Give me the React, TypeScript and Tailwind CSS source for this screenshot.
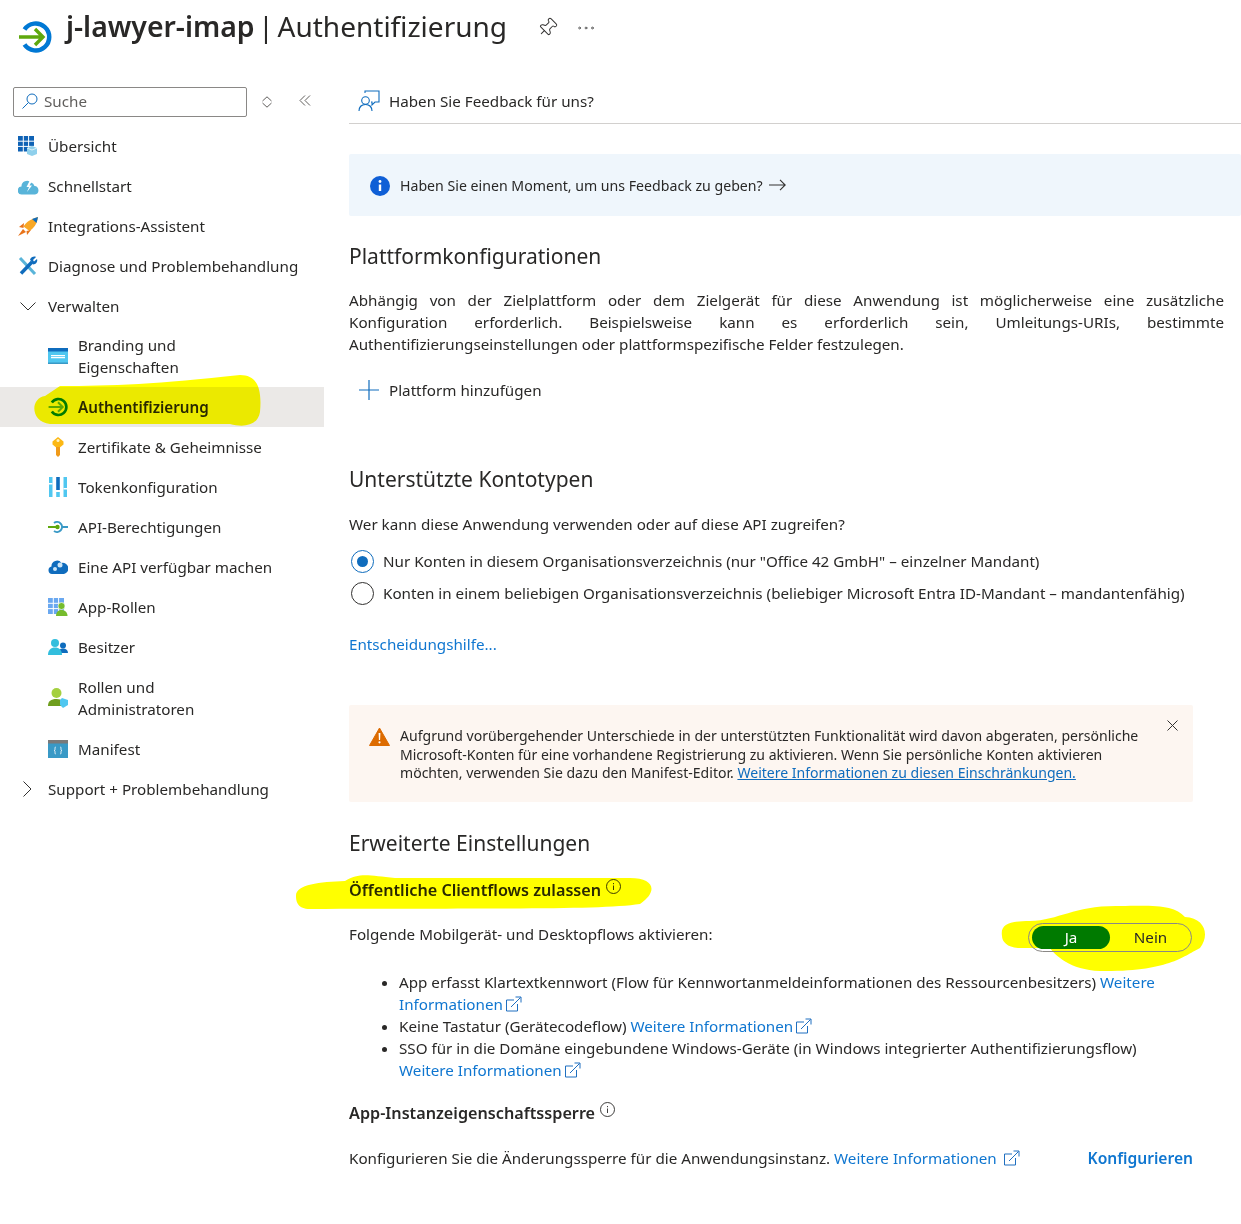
import React from 'react';
import { Ellipsis, Pin } from 'lucide-react';

const AuthIcon = ({ size = 34, ring = '#0078d4', arrow = '#5ea80d' }: { size?: number; ring?: string; arrow?: string }) => (
    <svg width={size} height={size} viewBox="0 0 34 34" fill="none">
        <path d="M6.5 9.5A13.5 13.5 0 1 1 6.5 24.5" stroke={ring} strokeWidth="4.5" />
        <path d="M1 17h24M17 9l8 8-8 8" stroke={arrow} strokeWidth="3.4" />
    </svg>
);

const GridIcon = () => (
    <svg width="20" height="20" viewBox="0 0 20 20">
        <path d="M0 0h16v15.500H0z" fill="#0f62b5" />
        <path d="M5.300 0v16M10.600 0v16M0 5.200h16M0 10.400h16" stroke="#fff" strokeWidth="1" />
        <path d="M14 10l5 2v6l-5 2-5-2v-6z" fill="#8fd0ec" />
        <path d="M9 12l5 2 5-2" stroke="#fff" strokeWidth=".7" fill="none" />
    </svg>
);

const CloudIcon = () => (
    <svg width="21" height="17" viewBox="0 0 21 17">
        <path d="M4 16.500a4 4 0 0 1-.5-8A5.500 5.500 0 0 1 13 4.500a5 5 0 0 1 3.500 3.500A4.300 4.300 0 0 1 17 16.500z" fill="#59b4d9" />
        <path d="M12 2L8.500 9H11l-2 5 5-6.500h-2.500L14 3z" fill="#fff" />
    </svg>
);

const RocketIcon = () => (
    <svg width="20" height="20" viewBox="0 0 20 20">
        <path d="M5.500 10.500C8 6 13 3 20 1c-1 7-4 11-8.500 14z" fill="#f9a825" />
        <path d="M14 3l6-2-1.500 6z" fill="#0f6cbd" />
        <path d="M6 7L1 11l4.500 1zM13 14l-4 5-.5-4zM5 13l3 3-8 4z" fill="#e8731a" />
    </svg>
);

const ToolsIcon = () => (
    <svg width="20" height="20" viewBox="0 0 20 20" fill="none">
        <path d="M2 2l15 16" stroke="#59b4d9" strokeWidth="3" />
        <path d="M14 6L3 17.500" stroke="#0f6cbd" strokeWidth="3.400" />
        <path d="M12 3.500C13 1 16 0 18 1l-3 3 1 1.500 3-2.500c1 2.500-1 5.500-4 5.500z" fill="#0f6cbd" />
    </svg>
);

const WwwIcon = () => (
    <svg width="20" height="16" viewBox="0 0 20 16">
        <rect width="20" height="16" fill="#50c7f0" />
        <rect width="20" height="3.500" fill="#0f6cbd" />
        <rect y="14.500" width="20" height="1.500" fill="#3999c6" />
        <path d="M3 7h14v1.200H3zM3 9h14v1.200H3z" fill="#fff" />
    </svg>
);

const KeyIcon = () => (
    <svg width="14" height="20" viewBox="0 0 14 20">
        <path d="M7 0l5.500 4.500v3L7 12 1.500 7.500v-3z" fill="#fcb814" />
        <path d="M5 10h4v8l-2 2-2-2z" fill="#f09a1a" />
        <circle cx="7" cy="3.500" r="1.500" fill="#fff3c4" />
    </svg>
);

const TokenIcon = () => (
    <svg width="18" height="20" viewBox="0 0 18 20">
        <path d="M0 0h3.500v20H0zM14.500 0H18v20h-3.500z" fill="#50c7f0" />
        <path d="M7.200 0h3.600v13H7.200z" fill="#0f6cbd" />
        <path d="M7.200 15h3.600v5H7.200z" fill="#50c7f0" />
        <path d="M0 6h3.500v1.500H0zM14.500 11H18v1.500h-3.500z" fill="#fff" />
    </svg>
);

const ApiIcon = () => (
    <svg width="20" height="12" viewBox="0 0 20 12" fill="none">
        <path d="M0 6h9" stroke="#5ea80d" strokeWidth="2" />
        <path d="M14 6h6" stroke="#3999c6" strokeWidth="2" />
        <path d="M6 2a5 5 0 1 1 0 8" stroke="#3999c6" strokeWidth="2" />
        <circle cx="9.500" cy="6" r="2.200" fill="#5ea80d" />
    </svg>
);

const ApiCloudIcon = () => (
    <svg width="20" height="16" viewBox="0 0 20 16">
        <path d="M4 15a3.800 3.800 0 0 1-.5-7.500A5.500 5.500 0 0 1 13.500 4 5 5 0 0 1 16 15z" fill="#0f6cbd" />
        <circle cx="7" cy="10" r="2" fill="#cde6f7" />
        <circle cx="12" cy="6" r="2.500" fill="#cde6f7" />
    </svg>
);

const RolesIcon = () => (
    <svg width="20" height="18" viewBox="0 0 20 18">
        <path d="M0 0h16v16H0z" fill="#6aa8f0" />
        <path d="M5.300 0v16M10.600 0v16M0 5.300h16M0 10.600h16" stroke="#fff" strokeWidth="1" />
        <circle cx="13.500" cy="8" r="3.500" fill="#76bc2d" stroke="#fff" strokeWidth=".6" />
        <path d="M8 18c0-4 2.500-6 5.500-6s6 2 6 6z" fill="#76bc2d" />
    </svg>
);

const OwnerIcon = () => (
    <svg width="20" height="16" viewBox="0 0 20 16">
        <circle cx="15" cy="6.500" r="3" fill="#0f6cbd" />
        <path d="M10 14c0-3 2-4.500 5-4.500s5 1.500 5 4.500z" fill="#0f6cbd" />
        <circle cx="7" cy="4" r="4" fill="#32bedd" />
        <path d="M0 16c0-5 3-7.500 7-7.500s7 2.500 7 7.500z" fill="#32bedd" />
    </svg>
);

const AdminIcon = () => (
    <svg width="20" height="20" viewBox="0 0 20 20">
        <circle cx="8.500" cy="5" r="5" fill="#a4d03f" />
        <path d="M0 18c0-5 3-7 8.500-7S16 14 16 18z" fill="#6f9e1e" />
        <path d="M14 10l6 2v5l-5 3-3-3v-5z" fill="#50c7f0" />
    </svg>
);

const ManifestIcon = () => (
    <svg width="20" height="18" viewBox="0 0 20 18">
        <rect width="20" height="18" fill="#3999c6" />
        <rect width="20" height="3.500" fill="#7a7a7a" />
        <path d="M8 7c-1 0-1 .5-1 2s-.5 1.500-1 1.500c.5 0 1 0 1 1.500s0 2 1 2M12 7c1 0 1 .5 1 2s.5 1.500 1 1.500c-.5 0-1 0-1 1.500s0 2-1 2" stroke="#fff" strokeWidth=".8" fill="none" />
    </svg>
);

const FeedbackIcon = () => (
    <svg width="22" height="22" viewBox="0 0 22 22" fill="none" stroke="#0f6cbd" strokeWidth="1.100">
        <circle cx="7.500" cy="10.500" r="3.800" />
        <path d="M1 21c0-4 2.500-6.500 6.500-6.500S14 17 14 21" />
        <path d="M7 3V1h14v11h-4l-3 3v-3h-1" />
    </svg>
);

const WarningIcon = () => (
    <svg width="21" height="19" viewBox="0 0 21 19">
        <path d="M10.500 1L20.500 18.500H.5z" fill="#dd6b00" stroke="#dd6b00" strokeLinejoin="round" />
        <path d="M9.600 6h1.800l-.3 7H9.900z" fill="#fff" />
        <circle cx="10.500" cy="15.300" r="1.100" fill="#fff" />
    </svg>
);

const SearchGlyph = () => (
    <svg width="16" height="16" viewBox="0 0 16 16" fill="none" stroke="#0f6cbd" strokeWidth="1">
        <circle cx="10" cy="6" r="5" />
        <path d="M6.500 9.500L.5 15.500" />
    </svg>
);

const SortGlyph = () => (
    <svg width="10" height="12" viewBox="0 0 10 12" fill="none" stroke="#605e5c" strokeWidth="1">
        <path d="M.5 5L5 .8 9.500 5M.5 7L5 11.200 9.500 7" />
    </svg>
);

const CollapseGlyph = () => (
    <svg width="12" height="11" viewBox="0 0 12 11" fill="none" stroke="#605e5c" strokeWidth="1">
        <path d="M6 .5L1 5.500l5 5M11 .5l-5 5 5 5" />
    </svg>
);

const ChevronDownGlyph = () => (
    <svg width="16" height="9" viewBox="0 0 16 9" fill="none" stroke="#323130" strokeWidth="1">
        <path d="M.5 .5L8 8l7.500-7.500" />
    </svg>
);

const ChevronRightGlyph = () => (
    <svg width="9" height="16" viewBox="0 0 9 16" fill="none" stroke="#323130" strokeWidth="1">
        <path d="M.5 .5L8 8 .5 15.500" />
    </svg>
);

const InfoSolid = () => (
    <svg width="20" height="20" viewBox="0 0 20 20">
        <circle cx="10" cy="10" r="10" fill="#0f5fd6" />
        <circle cx="10" cy="5.500" r="1.400" fill="#fff" />
        <path d="M8.800 8.500h2.400V15H8.800z" fill="#fff" />
    </svg>
);

const InfoOutline = () => (
    <svg width="15" height="15" viewBox="0 0 15 15" fill="none" stroke="#292827" strokeWidth=".9">
        <circle cx="7.500" cy="7.500" r="7" />
        <path d="M7.500 6.500v4.500M7.500 4v1.200" />
    </svg>
);

const ArrowGlyph = () => (
    <svg width="17" height="12" viewBox="0 0 17 12" fill="none" stroke="#323130" strokeWidth="1.100">
        <path d="M0 6h16M11 .8L16.200 6 11 11.200" />
    </svg>
);

const PlusGlyph = () => (
    <svg width="20" height="20" viewBox="0 0 20 20" fill="none" stroke="#0f6cbd" strokeWidth="1.200">
        <path d="M10 0v20M0 10h20" />
    </svg>
);

const CloseGlyph = () => (
    <svg width="11" height="11" viewBox="0 0 11 11" fill="none" stroke="#323130" strokeWidth="1">
        <path d="M.5 .5l10 10M10.500 .5l-10 10" />
    </svg>
);

const ExternalGlyph = () => (
    <svg className="inline ml-[2px] -mt-[3px]" width="17" height="16" viewBox="0 0 17 16" fill="none" stroke="#1f6fc0" strokeWidth="1">
        <path d="M9 4H1.500v11h11V8" />
        <path d="M6 11L15.500 1.500M10.500 1h5.500v5.500" />
    </svg>
);

type NavItem = { label: React.ReactNode; icon: React.ReactNode; tall?: boolean; active?: boolean };

const topItems: NavItem[] = [
    { label: 'Übersicht', icon: <GridIcon /> },
    { label: 'Schnellstart', icon: <CloudIcon /> },
    { label: 'Integrations-Assistent', icon: <RocketIcon /> },
    { label: 'Diagnose und Problembehandlung', icon: <ToolsIcon /> },
];

const subItems: NavItem[] = [
    { label: <>Branding und<br />Eigenschaften</>, icon: <WwwIcon />, tall: true },
    { label: 'Authentifizierung', icon: <AuthIcon size={20} ring="#007a00" arrow="#5ea80d" />, active: true },
    { label: 'Zertifikate & Geheimnisse', icon: <span className="pl-[3px]"><KeyIcon /></span> },
    { label: 'Tokenkonfiguration', icon: <span className="pl-[1px]"><TokenIcon /></span> },
    { label: 'API-Berechtigungen', icon: <ApiIcon /> },
    { label: 'Eine API verfügbar machen', icon: <ApiCloudIcon /> },
    { label: 'App-Rollen', icon: <RolesIcon /> },
    { label: 'Besitzer', icon: <OwnerIcon /> },
    { label: <>Rollen und<br />Administratoren</>, icon: <AdminIcon />, tall: true },
    { label: 'Manifest', icon: <ManifestIcon /> },
];

const SideRow = ({ item, sub }: { item: NavItem; sub?: boolean }) => (
    <div className={`flex items-center ${item.tall ? 'h-[62px] leading-[22px]' : 'h-10'} ${sub ? 'pl-[48px]' : 'pl-[18px]'} ${item.active ? 'bg-[#ebe9e7] font-semibold' : ''}`}>
        <span className="w-[30px] shrink-0 flex items-center">{item.icon}</span>
        <span>{item.label}</span>
    </div>
);

const MoreLink = ({ children }: { children: React.ReactNode }) => (
    <span className="text-[#0f76d0]">
        {children}
        <ExternalGlyph />
    </span>
);

const Heading = ({ children, className }: { children: React.ReactNode; className?: string }) => (
    <h2 className={`text-[21px] leading-[30px] text-[#292827] ${className}`}>{children}</h2>
);

export default function App() {
    return (
        <div className="relative w-[1241px] h-[1224px] overflow-hidden bg-white text-[#292827] text-[15.2px] leading-[22px] font-['Noto_Sans',sans-serif]">
            <header className="flex h-[70px] items-start">
                <span className="ml-[18px] mt-[20px] w-[48px]"><AuthIcon /></span>
                <h1 className="text-[28px] leading-[40px] mt-[6px] text-[#292827] [word-spacing:-3.5px]">
                    <span className="font-semibold text-[28.4px]">j-lawyer-imap</span> | Authentifizierung
                </h1>
                <Pin className="ml-[30px] mt-[17px] rotate-45 text-[#323130]" size={21} strokeWidth={1.1} />
                <Ellipsis className="ml-[17px] mt-[17px] text-[#555]" size={22} strokeWidth={1} />
            </header>

            <div className="flex">
                <aside className="w-[324px] shrink-0">
                    <div className="flex items-center h-[56px] pl-[13px] pb-[8px] pt-[15px]">
                        <div className="flex items-center w-[234px] h-[30px] border border-[#8a8886] rounded-[2px] pl-[8px] pb-[1px] text-[#605e5c]">
                            <span className="mr-[6px] flex"><SearchGlyph /></span>
                            Suche
                        </div>
                        <span className="ml-[15px] flex"><SortGlyph /></span>
                        <span className="ml-[27px] flex -mt-[2px]"><CollapseGlyph /></span>
                    </div>
                    {topItems.map((item, i) => <SideRow key={i} item={item} />)}
                    <div className="flex items-center h-10 pl-[20px]">
                        <span className="w-[28px] flex"><ChevronDownGlyph /></span>
                        Verwalten
                    </div>
                    <div className="-mt-px">
                        {subItems.map((item, i) => <SideRow key={i} item={item} sub />)}
                        <div className="flex items-center h-10 pl-[23px]">
                            <span className="w-[25px] flex"><ChevronRightGlyph /></span>
                            Support + Problembehandlung
                        </div>
                    </div>
                </aside>

                <main className="flex-1 ml-[25px]">
                    <div className="flex items-center h-[54px] pt-[8px] pl-[9px] border-b border-[#d2d0ce]">
                        <span className="w-[31px]"><FeedbackIcon /></span>
                        Haben Sie Feedback für uns?
                    </div>

                    <div className="flex items-center mt-[30px] h-[62px] pl-[21px] pt-[1px] bg-[#eff6fc] rounded-[2px] text-[14.15px]">
                        <span className="mr-[10px] flex"><InfoSolid /></span>
                        Haben Sie einen Moment, um uns Feedback zu geben?
                        <span className="ml-[6px] -mt-[2px] flex"><ArrowGlyph /></span>
                    </div>

                    <Heading className="mt-[25px]">Plattformkonfigurationen</Heading>
                    <p className="mt-[18px] w-[875px] text-justify">
                        Abhängig von der Zielplattform oder dem Zielgerät für diese Anwendung ist möglicherweise eine zusätzliche Konfiguration erforderlich. Beispielsweise kann es erforderlich sein, Umleitungs-URIs, bestimmte Authentifizierungseinstellungen oder plattformspezifische Felder festzulegen.
                    </p>
                    <div className="flex items-center mt-[24px] h-[22px] pl-[10px]">
                        <span className="mr-[10px] flex"><PlusGlyph /></span>
                        Plattform hinzufügen
                    </div>

                    <Heading className="mt-[63px]">Unterstützte Kontotypen</Heading>
                    <p className="mt-[19px]">Wer kann diese Anwendung verwenden oder auf diese API zugreifen?</p>
                    <div className="flex items-center mt-[15px] h-[22px] pl-[2px]">
                        <span className="flex items-center justify-center w-[23px] h-[23px] mr-[9px] rounded-full border border-[#0f6cbd]">
                            <span className="w-[11px] h-[11px] rounded-full bg-[#0f6cbd]" />
                        </span>
                        Nur Konten in diesem Organisationsverzeichnis (nur "Office 42 GmbH" – einzelner Mandant)
                    </div>
                    <div className="flex items-center mt-[10px] h-[22px] pl-[2px]">
                        <span className="w-[23px] h-[23px] mr-[9px] rounded-full border border-[#323130]" />
                        Konten in einem beliebigen Organisationsverzeichnis (beliebiger Microsoft Entra ID-Mandant – mandantenfähig)
                    </div>
                    <p className="mt-[29px] text-[#0f76d0]">Entscheidungshilfe...</p>

                    <div className="relative flex mt-[50px] w-[844px] h-[97px] pl-[20px] pt-[22px] bg-[#fdf6f1] rounded-[2px] text-[14.05px] leading-[18.5px]">
                        <span className="w-[31px] shrink-0"><WarningIcon /></span>
                        <p className="w-[760px]">
                            Aufgrund vorübergehender Unterschiede in der unterstützten Funktionalität wird davon abgeraten, persönliche<br />
                            Microsoft-Konten für eine vorhandene Registrierung zu aktivieren. Wenn Sie persönliche Konten aktivieren<br />
                            möchten, verwenden Sie dazu den Manifest-Editor. <span className="underline text-[#0f6cbd]">Weitere Informationen zu diesen Einschränkungen.</span>
                        </p>
                        <span className="absolute right-[15px] top-[15px] flex"><CloseGlyph /></span>
                    </div>

                    <Heading className="mt-[26px]">Erweiterte Einstellungen</Heading>
                    <div className="flex items-start mt-[21px] h-[22px] font-semibold text-[16.2px]">
                        Öffentliche Clientflows zulassen
                        <span className="ml-[5px] flex"><InfoOutline /></span>
                    </div>

                    <div className="flex items-center justify-between mt-[22px] w-[844px] h-[22px]">
                        Folgende Mobilgerät- und Desktopflows aktivieren:
                        <div className="relative z-10 flex items-center w-[164px] h-[29px] mt-[6px] mr-[1px] p-[3px] rounded-full border border-[#8a8886]">
                            <span className="flex items-center justify-center w-[78px] h-[23px] rounded-full bg-[#007a00] text-white">Ja</span>
                            <span className="flex-1 text-center pl-[3px]">Nein</span>
                        </div>
                    </div>

                    <ul className="mt-[26px] w-[844px] list-disc pl-[50px]">
                        <li>
                            App erfasst Klartextkennwort (Flow für Kennwortanmeldeinformationen des Ressourcenbesitzers) <span className="text-[#0f76d0]">Weitere</span><br />
                            <MoreLink>Informationen</MoreLink>
                        </li>
                        <li>Keine Tastatur (Gerätecodeflow) <MoreLink>Weitere Informationen</MoreLink></li>
                        <li>
                            SSO für in die Domäne eingebundene Windows-Geräte (in Windows integrierter Authentifizierungsflow)<br />
                            <MoreLink>Weitere Informationen</MoreLink>
                        </li>
                    </ul>

                    <div className="flex items-start mt-[21px] h-[22px] font-semibold text-[16.2px]">
                        App-Instanzeigenschaftssperre
                        <span className="ml-[5px] flex"><InfoOutline /></span>
                    </div>
                    <div className="flex items-center justify-between mt-[23px] w-[844px]">
                        <span>
                            Konfigurieren Sie die Änderungssperre für die Anwendungsinstanz. <MoreLink>Weitere Informationen </MoreLink>
                        </span>
                        <span className="font-semibold text-[15.6px] text-[#0f76d0]">Konfigurieren</span>
                    </div>
                </main>
            </div>

            <svg className="absolute left-0 top-0 pointer-events-none mix-blend-multiply" width="1241" height="1224" viewBox="0 0 1241 1224">
                <path d="M60 386C110 386 160 384 240 375C258 375 262 390 260 412C258 425 245 428 230 424C170 424 100 424 50 424C30 422 30 398 45 396Z" fill="#ffff00" />
                <path d="M296 896C296 884 320 882 345 881C360 872 370 876 395 878H630C655 878 658 892 640 904C600 910 500 908 310 909C298 909 296 902 296 896Z" fill="#ffff00" />
                <path d="M1002 936C1000 924 1010 921 1030 921C1060 920 1075 905 1120 906C1160 905 1175 906 1185 917C1205 918 1210 935 1200 948C1185 955 1170 972 1100 971C1070 970 1055 955 1050 948H1020C1008 948 1002 942 1002 936Z" fill="#ffff00" />
            </svg>
        </div>
    );
}
